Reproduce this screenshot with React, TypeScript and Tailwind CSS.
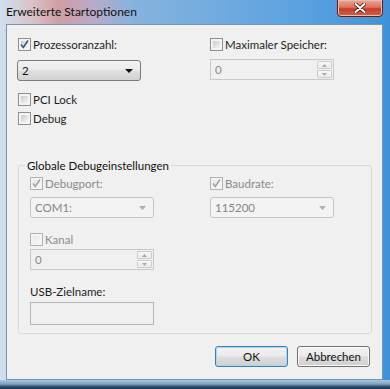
import React from 'react'

const font = { fontFamily: 'Lato, "Open Sans", sans-serif' }

function Check({ checked, disabled }: { checked?: boolean; disabled?: boolean }) {
  return (
    <span
      className={`relative shrink-0 w-[13px] h-[13px] border p-[2px] bg-[#f4f4f4] ${
        disabled ? 'border-[#b1b1b1]' : 'border-[#8e8f8f]'
      }`}
    >
      <span
        className={`block w-full h-full ${
          disabled
            ? 'bg-[linear-gradient(135deg,#e6e6e6,#f8f8f8)]'
            : 'bg-[linear-gradient(135deg,#c7cbd1,#f3f4f5)]'
        }`}
      />
      {checked && (
        <svg viewBox="0 0 13 13" className="absolute -left-px -top-px w-[13px] h-[13px]">
          <path
            d="M3 6.5 L5.3 9.5 L10 2.5"
            fill="none"
            stroke={disabled ? '#a3a3a3' : '#44557d'}
            strokeWidth="1.6"
          />
        </svg>
      )}
    </span>
  )
}

function CheckRow({ label, checked, disabled }: { label: string; checked?: boolean; disabled?: boolean }) {
  return (
    <div className="flex items-center gap-[2px] h-[15px]">
      <Check checked={checked} disabled={disabled} />
      <span className={disabled ? 'text-[#8b8b8b]' : 'text-[#1e1e1e]'}>{label}</span>
    </div>
  )
}

function Combo({ value, disabled }: { value: string; disabled?: boolean }) {
  if (disabled) {
    return (
      <div className="w-[124px] h-[21px] rounded-[3px] border border-[#c2c6c9] bg-[#f3f3f3] flex items-center justify-between pl-[4px] pr-[7px] text-[#858585]">
        <span>{value}</span>
        <svg width="7" height="4" viewBox="0 0 7 4">
          <path d="M0 0 H7 L3.5 4 Z" fill="#b0b0b0" />
        </svg>
      </div>
    )
  }
  return (
    <div className="w-[124px] h-[21px] rounded-[3px] border border-[#7a7a7a] bg-[linear-gradient(to_bottom,#f2f2f2_0%,#ebebeb_45%,#dedede_55%,#d2d2d2_100%)] flex items-center justify-between pl-[4px] pr-[7px] text-[#111]">
      <span>{value}</span>
      <svg width="8" height="4" viewBox="0 0 8 4">
        <path d="M0 0 H8 L4 4 Z" fill="#111" />
      </svg>
    </div>
  )
}

function Spin({ value }: { value: string }) {
  return (
    <div className="w-[124px] h-[21px] border border-[#c9c9c9] bg-[#f0f0f0] flex items-center justify-between pl-[4px] pr-px text-[#8a8a8a]">
      <span>{value}</span>
      <div className="flex flex-col gap-px">
        {[0, 1].map((i) => (
          <div
            key={i}
            className="w-[15px] h-[8px] border border-[#cdcdcd] rounded-[1px] bg-[linear-gradient(to_bottom,#f7f7f7,#ebebeb)] flex items-center justify-center"
          >
            <svg width="5" height="3" viewBox="0 0 5 3">
              <path d={i === 0 ? 'M0 3 H5 L2.5 0 Z' : 'M0 0 H5 L2.5 3 Z'} fill="#a8a8a8" />
            </svg>
          </div>
        ))}
      </div>
    </div>
  )
}

function Button({ label, primary }: { label: string; primary?: boolean }) {
  return (
    <div
      className={`w-[73px] h-[21px] rounded-[3px] border flex items-center justify-center text-[#111] bg-[linear-gradient(to_bottom,#f2f2f2_0%,#ebebeb_45%,#dddddd_55%,#cfcfcf_100%)] ${
        primary ? 'border-[#3c7fb1] shadow-[inset_0_0_0_1px_#a7d8f4]' : 'border-[#707070] shadow-[inset_0_0_0_1px_#fbfbfb]'
      }`}
    >
      {label}
    </div>
  )
}

export default function App() {
  return (
    <div
      className="w-[390px] h-[389px] flex flex-col overflow-hidden text-[11.5px] leading-[15px] bg-[linear-gradient(to_right,#cfe0f1_0%,#d8c0c4_9%,#cf9ea2_15%,#b9aac8_24%,#86b3de_34%,#72abe0_55%,#5aa1df_78%,#3f92da_100%)]"
      style={font}
    >
      {/* title bar */}
      <div className="h-[24px] shrink-0 flex items-start justify-between pl-[6px] pr-[7px]">
        <span className="mt-[4px] text-[12px] text-[#111]">Erweiterte Startoptionen</span>
        <div className="w-[46px] h-[18px] -mt-px rounded-b-[4px] border border-[#6b1a14] bg-[linear-gradient(to_bottom,#e9a99a_0%,#d9735f_45%,#c5402a_55%,#d5604a_100%)] shadow-[inset_0_0_0_1px_#eebaae] flex items-center justify-center">
          <svg width="12" height="10" viewBox="0 0 12 10">
            <path d="M1.5 1 L10.5 9 M10.5 1 L1.5 9" stroke="#3b0b06" strokeWidth="3.4" strokeLinecap="round" />
            <path d="M1.5 1 L10.5 9 M10.5 1 L1.5 9" stroke="#fff" strokeWidth="2" strokeLinecap="round" />
          </svg>
        </div>
      </div>

      {/* client area */}
      <div className="ml-[6px] mr-[7px] h-[356px] shrink-0 border border-[#7f93a8] bg-[#f0f0f0] flex flex-col pl-[11px] pt-[12px]">
        <div className="flex">
          <div className="w-[192px] flex flex-col">
            <CheckRow label="Prozessoranzahl:" checked />
            <div className="mt-[8px] -ml-px">
              <Combo value="2" />
            </div>
          </div>
          <div className="flex flex-col">
            <CheckRow label="Maximaler Speicher:" />
            <div className="mt-[7px]">
              <Spin value="0" />
            </div>
          </div>
        </div>

        <div className="mt-[11px]">
          <CheckRow label="PCI Lock" />
        </div>
        <div className="mt-[4px]">
          <CheckRow label="Debug" />
        </div>

        {/* group box */}
        <div className="relative mt-[39px] w-[354px] h-[169px] border border-[#d5dadd] rounded-[3px] pl-[11px] pt-[10px] flex flex-col">
          <span className="absolute left-[6px] -top-[8px] px-[2px] bg-[#f0f0f0] text-[#111]">
            Globale Debugeinstellungen
          </span>
          <div className="flex">
            <div className="w-[180px] flex flex-col">
              <CheckRow label="Debugport:" checked disabled />
              <div className="mt-[6px]">
                <Combo value="COM1:" disabled />
              </div>
            </div>
            <div className="flex flex-col">
              <CheckRow label="Baudrate:" checked disabled />
              <div className="mt-[6px]">
                <Combo value="115200" disabled />
              </div>
            </div>
          </div>
          <div className="mt-[14px]">
            <CheckRow label="Kanal" disabled />
          </div>
          <div className="mt-[2px]">
            <Spin value="0" />
          </div>
          <div className="mt-[14px] text-[#1e1e1e]">USB-Zielname:</div>
          <div className="mt-[3px] w-[124px] h-[23px] border border-[#b5b5b5] bg-[#f0f0f0]" />
        </div>

        <div className="mt-[12px] flex justify-end gap-[9px] pr-[12px]">
          <Button label="OK" primary />
          <Button label="Abbrechen" />
        </div>
      </div>

      {/* bottom frame */}
      <div className="flex-1 bg-[linear-gradient(to_bottom,#a8c5df_0%,#7fa3c4_45%,#2b4a68_75%,#1c3550_100%)]" />
    </div>
  )
}
